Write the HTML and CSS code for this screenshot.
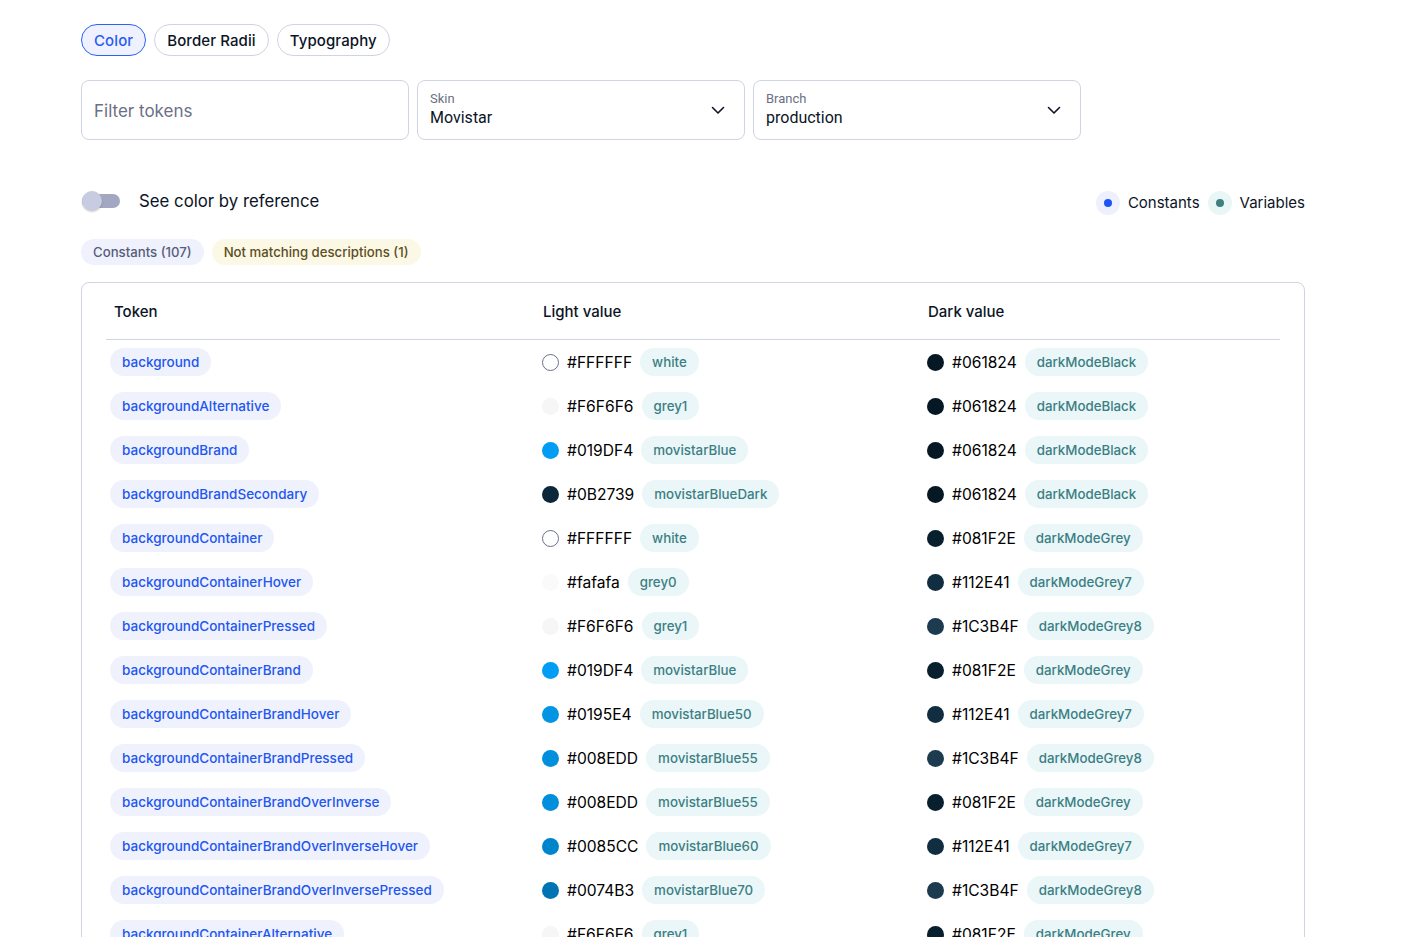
FILE: index.html
```html
<!DOCTYPE html>
<html lang="en">
<head>
<meta charset="utf-8">
<title>Tokens</title>
<link rel="stylesheet" href="styles.css">
</head>
<body>
<div class="page">
  <nav class="tabs">
    <button class="tab active">Color</button>
    <button class="tab">Border Radii</button>
    <button class="tab">Typography</button>
  </nav>

  <div class="filters">
    <div class="field"><span class="placeholder">Filter tokens</span></div>
    <div class="field select">
      <div class="sel-text"><span class="sel-label">Skin</span><span class="sel-value">Movistar</span></div>
      <svg class="chev" width="16" height="16" viewBox="0 0 16 16"><path d="M2.5 5.5 8 11l5.5-5.5" fill="none" stroke="#0b1426" stroke-width="1.6" stroke-linecap="round" stroke-linejoin="round"/></svg>
    </div>
    <div class="field select">
      <div class="sel-text"><span class="sel-label">Branch</span><span class="sel-value">production</span></div>
      <svg class="chev" width="16" height="16" viewBox="0 0 16 16"><path d="M2.5 5.5 8 11l5.5-5.5" fill="none" stroke="#0b1426" stroke-width="1.6" stroke-linecap="round" stroke-linejoin="round"/></svg>
    </div>
  </div>

  <div class="options">
    <div class="toggle-row">
      <span class="switch"><span class="knob"></span></span>
      <span class="toggle-label">See color by reference</span>
    </div>
    <div class="legend">
      <span class="legend-item"><span class="halo halo-blue"><span class="dot dot-blue"></span></span>Constants</span>
      <span class="legend-item"><span class="halo halo-teal"><span class="dot dot-teal"></span></span>Variables</span>
    </div>
  </div>

  <div class="counts">
    <span class="count count-const">Constants (107)</span>
    <span class="count count-warn">Not matching descriptions (1)</span>
  </div>

  <div class="table">
    <div class="thead">
      <div class="th">Token</div>
      <div class="th">Light value</div>
      <div class="th">Dark value</div>
    </div>
    <div class="tbody" id="rows"></div>
  </div>
</div>
<script src="app.js"></script>
</body>
</html>
```

FILE: app.js
```js
const rows = [
  ["background", "#FFFFFF", "white", "#061824", "darkModeBlack"],
  ["backgroundAlternative", "#F6F6F6", "grey1", "#061824", "darkModeBlack"],
  ["backgroundBrand", "#019DF4", "movistarBlue", "#061824", "darkModeBlack"],
  ["backgroundBrandSecondary", "#0B2739", "movistarBlueDark", "#061824", "darkModeBlack"],
  ["backgroundContainer", "#FFFFFF", "white", "#081F2E", "darkModeGrey"],
  ["backgroundContainerHover", "#fafafa", "grey0", "#112E41", "darkModeGrey7"],
  ["backgroundContainerPressed", "#F6F6F6", "grey1", "#1C3B4F", "darkModeGrey8"],
  ["backgroundContainerBrand", "#019DF4", "movistarBlue", "#081F2E", "darkModeGrey"],
  ["backgroundContainerBrandHover", "#0195E4", "movistarBlue50", "#112E41", "darkModeGrey7"],
  ["backgroundContainerBrandPressed", "#008EDD", "movistarBlue55", "#1C3B4F", "darkModeGrey8"],
  ["backgroundContainerBrandOverInverse", "#008EDD", "movistarBlue55", "#081F2E", "darkModeGrey"],
  ["backgroundContainerBrandOverInverseHover", "#0085CC", "movistarBlue60", "#112E41", "darkModeGrey7"],
  ["backgroundContainerBrandOverInversePressed", "#0074B3", "movistarBlue70", "#1C3B4F", "darkModeGrey8"],
  ["backgroundContainerAlternative", "#F6F6F6", "grey1", "#081F2E", "darkModeGrey"]
];

function valueCell(hex, name) {
  const cell = document.createElement("div");
  cell.className = "td value";
  const sw = document.createElement("span");
  sw.className = "swatch" + (hex.toUpperCase() === "#FFFFFF" ? " swatch-white" : "");
  sw.style.background = hex;
  const code = document.createElement("span");
  code.className = "hex";
  code.textContent = hex;
  const tag = document.createElement("span");
  tag.className = "ref";
  tag.textContent = name;
  cell.append(sw, code, tag);
  return cell;
}

const body = document.getElementById("rows");
rows.forEach(([token, lh, ln, dh, dn]) => {
  const row = document.createElement("div");
  row.className = "tr";
  const t = document.createElement("div");
  t.className = "td token-cell";
  const chip = document.createElement("span");
  chip.className = "token";
  chip.textContent = token;
  t.append(chip);
  row.append(t, valueCell(lh, ln), valueCell(dh, dn));
  body.append(row);
});
```

FILE: styles.css
```css
* { box-sizing: border-box; }
html, body { margin: 0; padding: 0; background: #ffffff; }
body {
  font-family: Inter, "Noto Sans", sans-serif;
  color: #0b1426;
  overflow: hidden;
  height: 937px;
}
.page {
  width: 1224px;
  margin-left: 81px;
  padding-top: 24px;
}

/* tabs */
.tabs { display: flex; gap: 8px; }
.tab {
  font-family: Inter, sans-serif;
  font-size: 15px;
  font-weight: 500;
  letter-spacing: 0.1px;
  height: 32px;
  padding: 0 12px;
  border-radius: 16px;
  border: 1px solid #d0d3e3;
  background: #ffffff;
  color: #0b1426;
  cursor: pointer;
}
.tab.active {
  border-color: #2a63f5;
  background: #eff2fe;
  color: #2a5cf0;
}

/* filters */
.filters { display: flex; gap: 8px; margin-top: 24px; }
.field {
  width: 328px;
  height: 60px;
  border: 1px solid #d0d3e3;
  border-radius: 8px;
  display: flex;
  align-items: center;
  padding: 0 12px;
}
.placeholder { font-size: 17px; color: #6b7085; margin-top: 1px; }
.select { justify-content: space-between; padding-right: 18px; }
.sel-text { display: flex; flex-direction: column; font-family: Roboto, sans-serif; margin-top: -1px; }
.sel-label { font-size: 13px; color: #6b7085; line-height: 16px; }
.sel-value { font-size: 16px; color: #0b1426; line-height: 20px; margin-top: 1px; }
.chev { display: block; }

/* options */
.options {
  display: flex;
  justify-content: space-between;
  align-items: center;
  margin-top: 49px;
  height: 24px;
}
.toggle-row { display: flex; align-items: center; gap: 19px; }
.switch {
  width: 38px;
  height: 14px;
  border-radius: 7px;
  background: #a3a8c2;
  position: relative;
  margin-left: 1px;
}
.knob {
  position: absolute;
  left: 0;
  top: -3px;
  width: 20px;
  height: 20px;
  border-radius: 50%;
  background: #c8cce0;
  box-shadow: 0 1px 2px rgba(0,0,0,0.2);
}
.toggle-label { font-size: 16.8px; color: #0b1426; }
.legend { display: flex; align-items: center; gap: 8px; margin-top: 3px; }
.legend-item { display: flex; align-items: center; gap: 8px; font-size: 15px; color: #0b1426; }
.halo {
  width: 24px; height: 24px; border-radius: 50%;
  display: flex; align-items: center; justify-content: center;
}
.halo-blue { background: #eef1fd; }
.halo-teal { background: #e9f6f6; }
.dot { width: 8px; height: 8px; border-radius: 50%; }
.dot-blue { background: #1e55f5; }
.dot-teal { background: #3e7f7f; }

/* counts */
.counts { display: flex; gap: 8px; margin-top: 26px; }
.count {
  height: 26px;
  line-height: 26px;
  padding: 0 12px;
  border-radius: 13px;
  font-size: 13.2px;
  font-weight: 500;
}
.count-const { background: #eff2fd; color: #565c7a; }
.count-warn { background: #fcf8e6; color: #5d4f1e; }

/* table */
.table {
  margin-top: 17px;
  border: 1px solid #d0d3e3;
  border-radius: 8px;
  padding: 0 24px;
}
.thead, .tr {
  display: grid;
  grid-template-columns: 429px 385px 1fr;
}
.thead { height: 57px; align-items: center; border-bottom: 1px solid #d0d3e3; }
.th { font-size: 15px; font-weight: 500; padding-left: 8px; color: #0b1426; }
.tr { height: 44px; align-items: center; }
.token-cell { padding-left: 4px; }
.token {
  display: inline-block;
  height: 28px;
  line-height: 28px;
  padding: 0 12px;
  border-radius: 14px;
  background: #eff2fd;
  color: #2256f0;
  font-size: 13.5px;
  font-weight: 500;
  white-space: nowrap;
}
.value { display: flex; align-items: center; padding-left: 7px; }
.swatch {
  width: 17px; height: 17px; border-radius: 50%;
  flex: none;
}
.swatch-white { border: 1px solid #6b6f8c; }
.hex { font-size: 15.6px; color: #000000; margin-left: 8px; }
.ref {
  margin-left: 8px;
  height: 28px;
  line-height: 28px;
  padding: 0 12px;
  border-radius: 14px;
  background: #eaf6f8;
  color: #3b7f84;
  font-size: 13.3px;
  font-weight: 500;
}
```
